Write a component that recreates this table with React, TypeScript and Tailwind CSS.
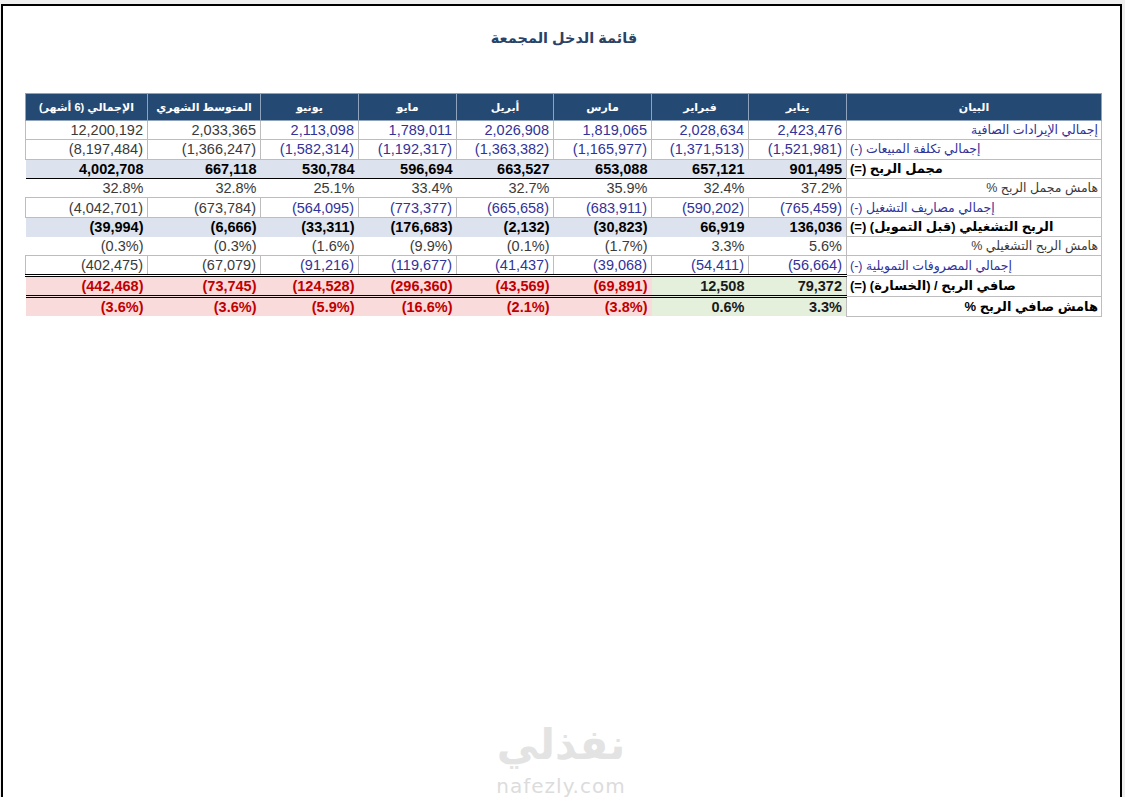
import React from 'react'

type Tone = 'plain' | 'sub' | 'total' | 'pct' | 'net'

interface Row {
  label: string
  tone: Tone
  alignLeft?: boolean
  values: string[]
}

const headers = ['البيان', 'يناير', 'فبراير', 'مارس', 'أبريل', 'مايو', 'يونيو', 'المتوسط الشهري', 'الإجمالي (6 أشهر)']

const widths = ['w-[255px]', 'w-[98px]', 'w-[97px]', 'w-[98px]', 'w-[97px]', 'w-[98px]', 'w-[98px]', 'w-[113px]', 'w-[122px]']

const rows: Row[] = [
  { label: 'إجمالي الإيرادات الصافية', tone: 'plain', values: ['2,423,476', '2,028,634', '1,819,065', '2,026,908', '1,789,011', '2,113,098', '2,033,365', '12,200,192'] },
  { label: 'إجمالي تكلفة المبيعات (-)', tone: 'plain', alignLeft: true, values: ['(1,521,981)', '(1,371,513)', '(1,165,977)', '(1,363,382)', '(1,192,317)', '(1,582,314)', '(1,366,247)', '(8,197,484)'] },
  { label: 'مجمل الربح (=)', tone: 'total', alignLeft: true, values: ['901,495', '657,121', '653,088', '663,527', '596,694', '530,784', '667,118', '4,002,708'] },
  { label: 'هامش مجمل الربح %', tone: 'pct', values: ['37.2%', '32.4%', '35.9%', '32.7%', '33.4%', '25.1%', '32.8%', '32.8%'] },
  { label: 'إجمالي مصاريف التشغيل (-)', tone: 'plain', alignLeft: true, values: ['(765,459)', '(590,202)', '(683,911)', '(665,658)', '(773,377)', '(564,095)', '(673,784)', '(4,042,701)'] },
  { label: 'الربح التشغيلي (قبل التمويل) (=)', tone: 'sub', alignLeft: true, values: ['136,036', '66,919', '(30,823)', '(2,132)', '(176,683)', '(33,311)', '(6,666)', '(39,994)'] },
  { label: 'هامش الربح التشغيلي %', tone: 'pct', values: ['5.6%', '3.3%', '(1.7%)', '(0.1%)', '(9.9%)', '(1.6%)', '(0.3%)', '(0.3%)'] },
  { label: 'إجمالي المصروفات التمويلية (-)', tone: 'plain', alignLeft: true, values: ['(56,664)', '(54,411)', '(39,068)', '(41,437)', '(119,677)', '(91,216)', '(67,079)', '(402,475)'] },
  { label: 'صافي الربح / (الخسارة) (=)', tone: 'net', alignLeft: true, values: ['79,372', '12,508', '(69,891)', '(43,569)', '(296,360)', '(124,528)', '(73,745)', '(442,468)'] },
  { label: 'هامش صافي الربح %', tone: 'net', values: ['3.3%', '0.6%', '(3.8%)', '(2.1%)', '(16.6%)', '(5.9%)', '(3.6%)', '(3.6%)'] },
]

const labelClass = (row: Row) => {
  const isHeavy = row.tone === 'total' || row.tone === 'sub' || row.tone === 'net'
  const color = row.tone === 'plain' ? 'text-[#31339a]' : isHeavy ? 'text-black' : 'text-[#3a3a3a]'
  const align = row.alignLeft ? 'text-left pl-[3px]' : 'text-right pr-[3px]'
  const weight = isHeavy ? 'font-bold text-[13px]' : 'text-[12.5px]'
  return `border border-[#bdbdbd] bg-white whitespace-nowrap overflow-visible ${color} ${align} ${weight}`
}

const valueClass = (row: Row, col: number) => {
  const isMonth = col < 6
  switch (row.tone) {
    case 'plain':
      return `border border-[#bdbdbd] ${isMonth ? 'text-[#31339a]' : 'text-[#3a3a3a]'}`
    case 'pct':
      return 'text-[#3a3a3a]'
    case 'total':
      return 'bg-[#dde3ee] font-bold text-black border-b border-b-black'
    case 'sub':
      return 'bg-[#dde3ee] font-bold text-black'
    case 'net': {
      const positive = !row.values[col].startsWith('(')
      const lines = row.label.startsWith('صافي') ? 'border-y-[3px] border-double border-y-black' : ''
      return positive
        ? `bg-[#e4efdc] font-bold text-[#1a1a1a] ${lines}`
        : `bg-[#fadbdb] font-bold text-[#c00000] ${lines}`
    }
  }
}

export default function App() {
  return (
    <div className="h-[797px] overflow-hidden bg-[#efefef] pt-[4px] pl-[1px] pr-[3px] font-['Liberation_Sans','DejaVu_Sans',sans-serif]">
      <div className="flex h-[810px] flex-col border-l-2 border-r-2 border-t-2 border-black bg-white pl-[22px] pr-[17px]">
        <h1 dir="rtl" className="mt-[22px] text-center text-[14.5px] font-bold text-[#2b4266]">
          قائمة الدخل المجمعة
        </h1>

        <table dir="rtl" className="mt-[43px] w-[1076px] table-fixed border-collapse">
          <colgroup>
            {widths.map((w, i) => (
              <col key={i} className={w} />
            ))}
          </colgroup>
          <thead>
            <tr className="h-[27px] bg-[#244a74]">
              {headers.map(h => (
                <th
                  key={h}
                  className="border border-[#8fa3bd] text-center text-[11px] font-bold text-white"
                >
                  {h}
                </th>
              ))}
            </tr>
          </thead>
          <tbody>
            {rows.map(row => (
              <tr key={row.label} className="h-[19.4px] leading-[18px]">
                <td className={labelClass(row)}>{row.label}</td>
                {row.values.map((v, c) => (
                  <td
                    key={c}
                    dir="ltr"
                    className={`pr-[4px] text-right text-[14.5px] ${valueClass(row, c)}`}
                  >
                    {v}
                  </td>
                ))}
              </tr>
            ))}
          </tbody>
        </table>

        <div className="mt-auto mb-[18px] flex flex-col items-center pr-[6px] leading-none">
          <span dir="rtl" className="text-[42px] font-bold text-[#e3e3e3] font-['DejaVu_Sans',sans-serif]">
            نفذلي
          </span>
          <span className="mt-[10px] text-[20px] tracking-[1px] text-[#dcdcdc] font-['DejaVu_Sans',sans-serif]">
            nafezly.com
          </span>
        </div>
      </div>
    </div>
  )
}
